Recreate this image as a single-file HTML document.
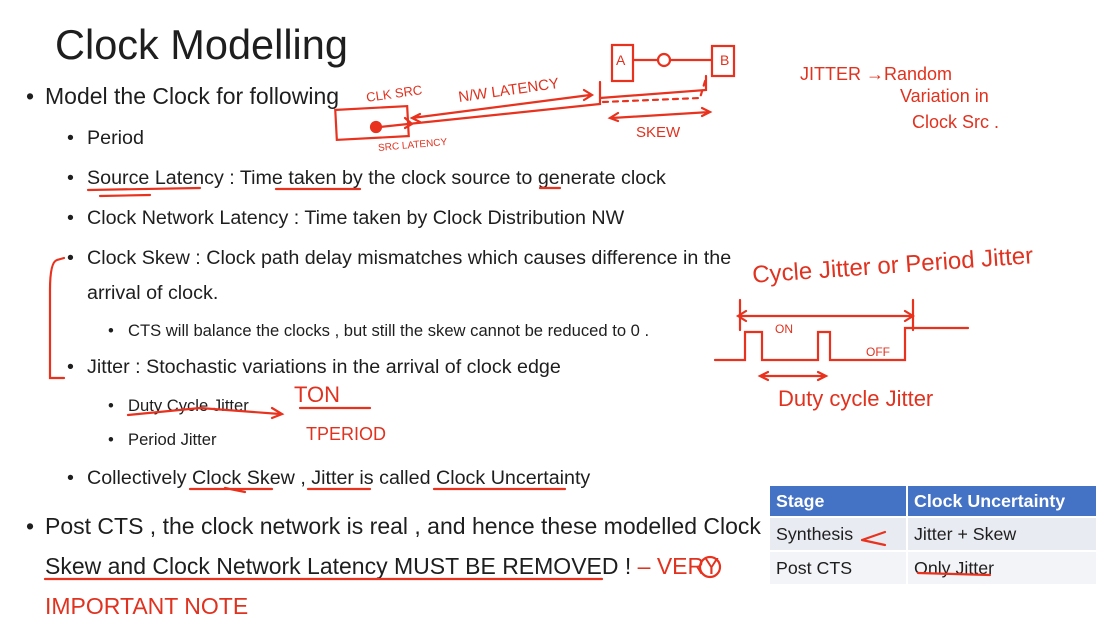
<!DOCTYPE html>
<html><head><meta charset="utf-8"><style>
body{margin:0;width:1112px;height:626px;background:#fff;position:relative;overflow:hidden;font-family:"Liberation Sans",sans-serif;color:#1e1e1e}
.t{position:absolute;white-space:nowrap}
.b:before{content:"•";position:absolute;left:-19px}
.h{font-size:41.5px;left:55px;top:21px}
.l1{font-size:23px;left:45px}
.l2{font-size:19.7px;left:87px}
.l3{font-size:16.6px;left:128px}
.l2:before{left:-20px}.l3:before{left:-20px}
.r{color:#e0321f}
table{position:absolute;left:768px;top:484px;border-collapse:collapse;font-size:17.8px}
td{height:32px;padding:0 6px;border:2px solid #fff}
th{height:30px;padding:0 6px;background:#4472c4;color:#fff;text-align:left;font-size:17.8px;border:2px solid #fff}
tr.a td{background:#e9ebf2}tr.c td{background:#f3f4f8}
svg{position:absolute;left:0;top:0}
</style></head><body>
<div class="t h">Clock Modelling</div>
<div class="t l1 b" style="top:83px">Model the Clock for following</div>
<div class="t l2 b" style="top:127px">Period</div>
<div class="t l2 b" style="top:167px">Source Latency : Time taken by the clock source to generate clock</div>
<div class="t l2 b" style="top:207px">Clock Network Latency : Time taken by Clock Distribution NW</div>
<div class="t l2 b" style="top:247px">Clock Skew : Clock path delay mismatches which causes difference in the</div>
<div class="t l2" style="top:282px">arrival of clock.</div>
<div class="t l3 b" style="top:321px">CTS will balance the clocks , but still the skew cannot be reduced to 0 .</div>
<div class="t l2 b" style="top:356px">Jitter : Stochastic variations in the arrival of clock edge</div>
<div class="t l3 b" style="top:396px">Duty Cycle Jitter</div>
<div class="t l3 b" style="top:430px">Period Jitter</div>
<div class="t l2 b" style="top:467px">Collectively Clock Skew , Jitter is called Clock Uncertainty</div>
<div class="t l1 b" style="top:513px">Post CTS , the clock network is real , and hence these modelled Clock</div>
<div class="t l1" style="top:553px">Skew and Clock Network Latency MUST BE REMOVED ! <span class="r">– VERY</span></div>
<div class="t l1 r" style="top:593px">IMPORTANT NOTE</div>
<table><tr><th style="width:124px">Stage</th><th style="width:176px">Clock Uncertainty</th></tr>
<tr class="a"><td>Synthesis</td><td>Jitter + Skew</td></tr>
<tr class="c"><td>Post CTS</td><td>Only Jitter</td></tr></table>
<svg width="1112" height="626" fill="none" stroke="#e8321e" stroke-width="2.2" stroke-linecap="round">
<rect x="336" y="108" width="72" height="30" transform="rotate(-3 372 123)"/>
<circle cx="376" cy="127" r="5" fill="#e8321e"/>
<path d="M380 127 L408 124 L600 104 L600 82 M405 118 L412 124 L405 128"/>
<path d="M412 118 L590 95 M420 114 L412 118 L420 122 M584 90 L592 95 L584 100"/>
<rect x="612" y="45" width="21" height="36"/><circle cx="664" cy="60" r="6"/><path d="M633 60 L658 60 M670 60 L712 60"/><rect x="712" y="46" width="22" height="30"/>
<path d="M600 98 L706 90 L706 76 M612 118 L710 112 M618 113 L610 118 L618 121 M702 108 L710 112 L702 116"/>
<path stroke-dasharray="5 5" d="M603 102 L700 98 L706 78"/>
<path d="M738 316 L912 316 M746 311 L738 316 L746 321 M905 311 L913 316 L905 321 M740 300 L740 330 M913 300 L913 330"/>
<path d="M715 360 L745 360 L745 332 L762 332 L762 360 L818 360 L818 332 L830 332 L830 360 L905 360 L905 328 L968 328"/>
<path d="M760 376 L825 376 M768 372 L760 376 L768 380 M818 372 L826 376 L818 380"/>
<path d="M57 260 Q50 262 50 290 L50 378 L64 378 M57 260 L64 258"/>
<path d="M88 190 L200 188 M100 196 L150 195 M276 189 L360 189 M540 188 L560 188 M190 489 L272 489 M225 488 L245 492 M308 489 L370 489 M434 489 L565 489"/>
<path d="M45 579 L602 579 M128 415 L200 408 L280 414 M272 408 L282 414 L272 418 M862 540 L885 532 M862 540 L885 545 M918 573 L990 575 M300 408 L370 408"/>
<circle cx="710" cy="567" r="10"/>
</svg>
<div class="t r" style="left:366px;top:86px;font-size:13px;transform:rotate(-8deg)">CLK SRC</div>
<div class="t r" style="left:458px;top:82px;font-size:15px;transform:rotate(-8deg)">N/W LATENCY</div>
<div class="t r" style="left:378px;top:140px;font-size:10px;transform:rotate(-5deg)">SRC LATENCY</div>
<div class="t r" style="left:636px;top:124px;font-size:15px">SKEW</div>
<div class="t r" style="left:616px;top:52px;font-size:14px">A</div>
<div class="t r" style="left:720px;top:52px;font-size:14px">B</div>
<div class="t r" style="left:800px;top:64px;font-size:18px">JITTER →Random</div>
<div class="t r" style="left:900px;top:86px;font-size:18px">Variation in</div>
<div class="t r" style="left:912px;top:112px;font-size:18px">Clock Src .</div>
<div class="t r" style="left:752px;top:252px;font-size:24px;transform:rotate(-4deg)">Cycle Jitter or Period Jitter</div>
<div class="t r" style="left:778px;top:386px;font-size:22px">Duty cycle Jitter</div>
<div class="t r" style="left:775px;top:322px;font-size:12px">ON</div>
<div class="t r" style="left:866px;top:345px;font-size:12px">OFF</div>
<div class="t r" style="left:294px;top:382px;font-size:22px">TON</div>
<div class="t r" style="left:306px;top:424px;font-size:18px">TPERIOD</div>
</body></html>
